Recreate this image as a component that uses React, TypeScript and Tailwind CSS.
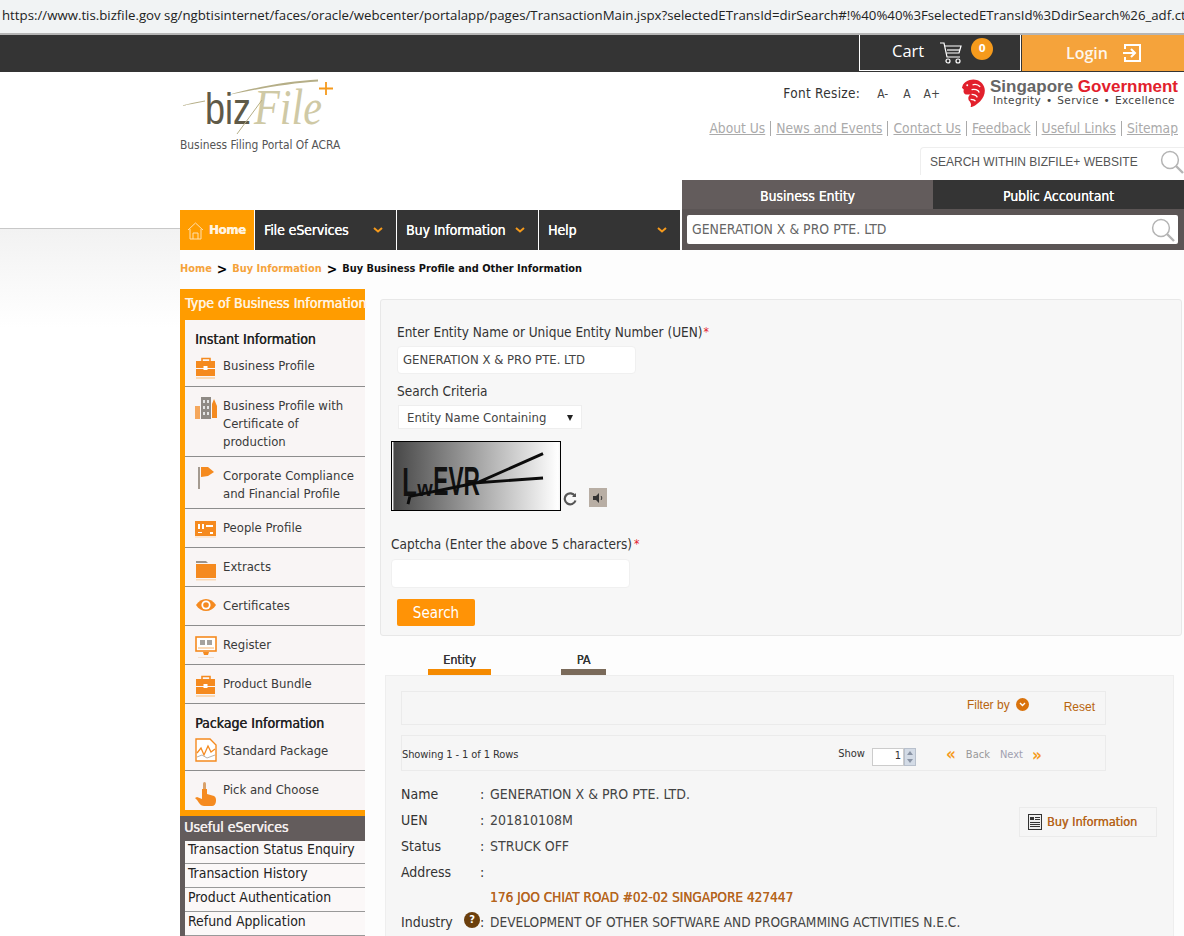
import React from "react";

const Ic = ({ children, w = 24, h = 24 }: { children: React.ReactNode; w?: number; h?: number }) => (
  <svg width={w} height={h} viewBox="0 0 24 24" className="shrink-0">{children}</svg>
);
const O = "#f58a1f";

const Briefcase = () => (
  <Ic>
    <path d="M8 5V2.5h8V5" fill="none" stroke={O} strokeWidth="1.6" />
    <rect x="2" y="5" width="19" height="7" fill={O} />
    <rect x="2" y="13" width="19" height="7" fill={O} />
    <rect x="9.5" y="10" width="4" height="4" fill="#fff" />
    <rect x="2" y="21" width="19" height="2" fill="#fbd9b5" />
  </Ic>
);
const Building = () => (
  <Ic>
    <rect x="1" y="10" width="5" height="13" fill="#f5a75c" />
    <path d="M18 22V8l2-5 3 7v12z" fill={O} />
    <rect x="7" y="1" width="10" height="22" fill="#8f8a85" />
    <path d="M9 4h2v3H9zM13 4h2v3h-2zM9 10h2v3H9zM13 10h2v3h-2zM9 16h2v3H9zM13 16h2v3h-2z" fill="#e4e4e4" />
  </Ic>
);
const Flag = () => (
  <Ic>
    <rect x="4" y="1" width="2" height="22" fill="#a49a90" />
    <path d="M7 1h7l6 5-6 4-7 1z" fill={O} />
  </Ic>
);
const People = () => (
  <Ic>
    <rect x="1" y="3" width="21" height="15" fill={O} />
    <path d="M4 6h2v5H4zM8 6h2v5H8zM12 7h7v2h-7zM4 14h4v1H4zM16 14h3v2h-3z" fill="#fff" />
    <rect x="1" y="18.5" width="21" height="1" fill="#fbd9b5" />
  </Ic>
);
const Folder = () => (
  <Ic>
    <path d="M2 4h10l2 2H2z" fill="#9a948e" />
    <rect x="2" y="7" width="20" height="14" fill={O} />
    <rect x="2" y="22" width="20" height="1.5" fill="#fbd9b5" />
  </Ic>
);
const Eye = () => (
  <Ic>
    <path d="M2 9c5-8 15-8 20 0-5 8-15 8-20 0z" fill={O} />
    <circle cx="12" cy="9" r="4.6" fill="#fff" />
    <circle cx="12" cy="9" r="2.8" fill={O} />
  </Ic>
);
const Monitor = () => (
  <Ic>
    <rect x="2" y="2" width="20" height="14" fill="#fff" stroke={O} strokeWidth="1.6" />
    <rect x="6" y="5" width="5" height="5" fill="#a5a29e" />
    <rect x="13" y="5" width="5" height="5" fill="#a5a29e" />
    <rect x="4" y="12" width="16" height="2" fill="#fbd9b5" />
    <path d="M9 17h6l-1 3h-4z" fill={O} />
    <rect x="4" y="22" width="16" height="1" fill="#f3e0cf" />
  </Ic>
);
const ChartDoc = () => (
  <Ic>
    <path d="M2 1h14l6 6v16H2z" fill="#fff" stroke={O} strokeWidth="1.4" />
    <path d="M3 15l4-5 3 7 4-9 3 6 4-3" fill="none" stroke={O} strokeWidth="1.3" />
    <path d="M3 19l5-2 5 3 8-3" fill="none" stroke="#b8b0a8" strokeWidth="1" />
  </Ic>
);
const Hand = () => (
  <Ic w={24} h={26}>
    <rect x="9" y="1" width="3" height="11" rx="1.5" fill="#d9a16b" />
    <path d="M8 8h5v5l7 2c2 1 2 3 2 5 0 3-2 5-4 5H10c-3 0-5-3-7-6l-2-2 2-1 5 2z" fill={O} />
  </Ic>
);
const Lens = ({ s = 24, c = "#b4b4b4" }: { s?: number; c?: string }) => (
  <svg width={s} height={s} viewBox="0 0 24 24" className="shrink-0">
    <circle cx="10" cy="10" r="8.4" fill="none" stroke={c} strokeWidth="1.5" />
    <path d="M16 16l7 7" stroke={c} strokeWidth="2.4" />
  </svg>
);
const Chev = () => (
  <svg width="10" height="6" viewBox="0 0 10 6"><path d="M1 1l4 3.5L9 1" fill="none" stroke="#f59a1c" strokeWidth="2" /></svg>
);

const Row = ({ icon, children, h, noBorder, textTop = "" }: { icon: React.ReactNode; children: React.ReactNode; h: string; noBorder?: boolean; textTop?: string }) => (
  <div className={`${h} flex items-start ${noBorder ? "" : "border-b border-[#8d8d8d]"}`}>
    <div className="w-[38px] pl-[9px] flex shrink-0">{icon}</div>
    <div className={`text-[#3a3a3a] leading-[18px] ${textTop}`}>{children}</div>
  </div>
);

const Sep = () => <span className="w-px h-[15px] bg-[#aaa] mx-[5px]" />;

const Detail = ({ k, h, children, help, className }: { k?: string; h: string; children?: React.ReactNode; help?: boolean; className?: string }) => (
  <div className={`flex items-center ${h}`}>
    <div className="w-[63px] text-[#333] shrink-0">{k}</div>
    {help ? (
      <>
        <span className="w-4 h-4 shrink-0 rounded-full bg-[#6b3f0c] text-white text-[11px] leading-4 text-center font-bold -mt-[5px]">?</span>
        <span className="w-[10px] shrink-0 text-[#333]">:</span>
      </>
    ) : (
      <span className="w-[26px] shrink-0 pl-[16px] text-[#333]">{k && ":"}</span>
    )}
    <span className={className ?? "text-[#444]"}>{children}</span>
  </div>
);

export default function App() {
  return (
    <div className="h-[936px] w-[1184px] overflow-hidden bg-white font-['DejaVu_Sans_Condensed','DejaVu_Sans',sans-serif] text-[13px]">
      {/* URL bar */}
      <div className="h-[33px] bg-[#f1f3f4] text-[13.24px] leading-[31px] pl-[2px] whitespace-nowrap overflow-hidden text-[#222] font-['Open_Sans',sans-serif]">
        https://www.tis.bizfile.gov sg/ngbtisinternet/faces/oracle/webcenter/portalapp/pages/TransactionMain.jspx?selectedETransId=dirSearch#!%40%40%3FselectedETransId%3DdirSearch%26_adf.ct
      </div>
      <div className="h-[2px] bg-[#b5b5b5]" />
      {/* dark top bar */}
      <div className="h-[37px] bg-[#343434] flex justify-end">
        <div className="w-[162px] border border-white border-t-0 h-[36px] flex items-center pl-[32px] text-white">
          <span className="text-[16.5px] -mt-[3px] font-['Open_Sans',sans-serif]">Cart</span>
          <svg width="24" height="24" viewBox="0 0 24 24" className="ml-[15px]" fill="none" stroke="#fff" strokeWidth="1.2">
            <path d="M1 2h4l3 14h13" />
            <path d="M6 5h16l-2 7H7.5" />
            <path d="M8 9h13" />
            <circle cx="9" cy="20" r="2" />
            <circle cx="19" cy="20" r="2" />
          </svg>
          <span className="ml-[8px] -mt-[7px] w-[22px] h-[22px] rounded-full bg-[#f59a1c] text-white text-[11px] font-bold flex items-center justify-center">0</span>
        </div>
        <div className="w-[163px] h-[36px] bg-[#f5a33b] flex items-center pl-[44px] text-white border-l-[1px] border-[#343434]">
          <span className="text-[16px] opacity-90 font-['Open_Sans',sans-serif] font-semibold">Login</span>
          <svg width="20" height="20" viewBox="0 0 20 20" className="ml-[14px]" fill="none" stroke="#fff" strokeWidth="2">
            <path d="M3 6V2h15v16H3v-4" />
            <path d="M1 10h11M9 6l4 4-4 4" />
          </svg>
        </div>
      </div>

      <div className="flex">
        {/* page background band on the left */}
        <div className="w-[180px] shrink-0">
          <div className="h-[156px]" />
          <div className="h-[100px] border-t border-[#c8c8c8] bg-gradient-to-b from-[#f2f2f2] to-white" />
        </div>

        <div className="w-[1004px]">
          {/* header */}
          <div className="h-[108px] flex justify-between">
            <div className="w-[180px] pt-[6px]">
              <svg width="160" height="58" viewBox="0 0 160 58" className="block">
                <path d="M0 28C8 26 16 24 25 22.5L25 23.5C16 25 8 27 0 28z" fill="#b5ae87" />
                <path d="M48 17C75 9 110 3 138 1.5L138 3.5C110 5 78 11 48 17z" fill="#b5ae87" />
                <text x="25" y="46" fontFamily="Liberation Sans" fontSize="44" fill="#5f5a48" textLength="46" lengthAdjust="spacingAndGlyphs">biz</text>
                <text x="74" y="46" fontFamily="Liberation Serif" fontStyle="italic" fontSize="50" fill="#cfc9a5" textLength="68" lengthAdjust="spacingAndGlyphs">File</text>
                <path d="M57 56L82 22" stroke="#b5ae87" strokeWidth="1" />
                <path d="M146 4v13M139 10.500h14" stroke="#f59a1c" strokeWidth="1.8" />
              </svg>
              <div className="text-[11.9px] text-[#555] mt-[1px] whitespace-nowrap leading-[16px]">Business Filing Portal Of ACRA</div>
            </div>
            <div className="flex flex-col items-end">
              <div className="flex items-start h-[43px] pt-[7px] pr-[6px]">
                <span className="text-[13.5px] text-[#333] mt-[4px] tracking-[0.3px]">Font Resize:</span>
                <span className="ml-[17px] mt-[6px] text-[12px] text-[#444]">A-</span>
                <span className="ml-[15px] mt-[6px] text-[12px] text-[#444]">A</span>
                <span className="ml-[13px] mt-[6px] text-[12px] text-[#444]">A+</span>
                <svg width="25" height="29" viewBox="0 0 26 30" className="ml-[21px]">
                  <path d="M9 1C15-1 22 2 24 8c2 5 0 11-4 15-3 3-7 6-10 6 1-3 0-5-2-7-1-3 0-5 2-6H5c-2-1-3-3-2-5L1 9l1-3c2-3 4-4 7-5z" fill="#e2202c" />
                  <path d="M12 6c3-1 6 0 8 2M11 11c3-1 7 0 8 3M11 16c2 0 5 1 6 3M10 21c2 0 4 0 5 2" stroke="#fff" strokeWidth="1.3" fill="none" />
                  <circle cx="6.500" cy="6.500" r="1" fill="#fff" />
                </svg>
                <div className="ml-[4px] flex flex-col items-center font-['DejaVu_Sans',sans-serif]">
                  <div className="text-[17px] font-bold leading-[15px] whitespace-nowrap font-['Liberation_Sans',sans-serif]">
                    <span className="text-[#666]">Singapore </span>
                    <span className="text-[#e2202c]">Government</span>
                  </div>
                  <div className="text-[10.5px] leading-[13px] text-[#444] whitespace-nowrap tracking-[0.4px] [word-spacing:1px]">Integrity • Service • Excellence</div>
                </div>
              </div>
              <div className="flex items-center h-[27px] pr-[6px] text-[#aaaaaa] text-[13.72px] underline">
                <span>About Us</span><Sep /><span>News and Events</span><Sep /><span>Contact Us</span><Sep /><span>Feedback</span><Sep /><span>Useful Links</span><Sep /><span>Sitemap</span>
              </div>
              <div className="mt-[5px] w-[264px] h-[28px] border-l border-t border-[#eeeeee] rounded-tl flex items-center justify-between pl-[9px] font-['Liberation_Sans',sans-serif] text-[12px] text-[#555]">
                <span>SEARCH WITHIN BIZFILE+ WEBSITE</span>
                <Lens s={24} />
              </div>
            </div>
          </div>

          {/* nav + tab panel */}
          <div className="flex h-[70px] items-end">
            <div className="w-[500px] h-[40px] flex gap-px text-white text-[14px] tracking-[-0.1px] [text-shadow:0.3px_0_0_currentColor]">
              <div className="w-[74px] bg-[#ff9c00] flex items-center pl-[7px] gap-[5px]">
                <svg width="17" height="19" viewBox="0 0 17 19" fill="none" stroke="#ffe0b0" strokeWidth="1"><path d="M1 9l7.5-7L16 9M3 8v10h11V8M6 18v-6h5v6" /></svg>
                <span className="font-bold text-[13px] text-[#fff3e0] tracking-[-0.3px]">Home</span>
              </div>
              <div className="w-[141px] bg-[#343434] flex items-center justify-between pl-[9px] pr-[13px]"><span>File eServices</span><Chev /></div>
              <div className="w-[141px] bg-[#343434] flex items-center justify-between pl-[9px] pr-[13px]"><span>Buy Information</span><Chev /></div>
              <div className="w-[141px] bg-[#343434] flex items-center justify-between pl-[9px] pr-[13px]"><span>Help</span><Chev /></div>
            </div>
            <div className="ml-[2px] w-[502px] h-[70px] flex flex-col">
              <div className="flex h-[29px] text-white text-[13.8px] pt-0">
                <div className="w-[251px] bg-[#635c5c] flex items-center justify-center pt-[3px] [text-shadow:0.2px_0_0_currentColor]">Business Entity</div>
                <div className="flex-1 bg-[#343434] flex items-center justify-center pt-[3px] [text-shadow:0.2px_0_0_currentColor]">Public Accountant</div>
              </div>
              <div className="h-[41px] bg-[#5b5555] px-[5px] pt-[6px]">
                <div className="h-[29px] w-[491px] bg-white rounded-[2px] flex items-center justify-between pl-[5px] pr-[3px] text-[13.9px] text-[#666]">
                  <span>GENERATION X &amp; PRO PTE. LTD</span>
                  <Lens s={24} />
                </div>
              </div>
            </div>
          </div>

          {/* breadcrumb */}
          <div className="h-[39px] flex items-center text-[10.9px] font-bold bg-[#fdfdfd]">
            <span className="text-[#f5a33b]">Home</span>
            <span className="mx-[5px] text-[14px] text-black">&gt;</span>
            <span className="text-[#f5a33b]">Buy Information</span>
            <span className="mx-[5px] text-[14px] text-black">&gt;</span>
            <span className="text-[#111]">Buy Business Profile and Other Information</span>
          </div>

          <div className="flex gap-[15px] bg-[#fdfdfd]">
            {/* sidebar */}
            <div className="w-[185px] shrink-0">
              <div className="h-[31px] bg-[#ff9c00] text-[#fff3e0] text-[14px] leading-[29px] pl-[5px] whitespace-nowrap [text-shadow:0.5px_0_0_currentColor]">Type of Business Information</div>
              <div className="border-l-[5px] border-[#ff9c00] bg-[#f9f5f5]">
                <div className="pl-[10px] h-[36px] pt-[10px] text-[14px] leading-[18px] text-[#222] [text-shadow:0.4px_0_0_currentColor]">Instant Information</div>
                <Row h="h-[31px]" textTop="mt-[1px]" icon={<Briefcase />}>Business Profile</Row>
                <Row h="h-[70px] pt-[9px]" textTop="mt-[1px]" icon={<Building />}>Business Profile with<br />Certificate of<br />production</Row>
                <Row h="h-[52px] pt-[9px]" textTop="mt-[1px]" icon={<Flag />}>Corporate Compliance<br />and Financial Profile</Row>
                <Row h="h-[39px] pt-[9px]" textTop="mt-[1px]" icon={<People />}>People Profile</Row>
                <Row h="h-[39px] pt-[9px]" textTop="mt-[1px]" icon={<Folder />}>Extracts</Row>
                <Row h="h-[39px] pt-[9px]" textTop="mt-[1px]" icon={<Eye />}>Certificates</Row>
                <Row h="h-[39px] pt-[9px]" textTop="mt-[1px]" icon={<Monitor />}>Register</Row>
                <Row h="h-[39px] pt-[9px]" textTop="mt-[1px]" icon={<Briefcase />}>Product Bundle</Row>
                <div className="pl-[10px] h-[34px] pt-[10px] text-[14px] leading-[18px] text-[#222] [text-shadow:0.4px_0_0_currentColor]">Package Information</div>
                <Row h="h-[33px]" textTop="mt-[4px]" icon={<ChartDoc />}>Standard Package</Row>
                <Row h="h-[39px] pt-[9px]" textTop="mt-[1px]" noBorder icon={<Hand />}>Pick and Choose</Row>
              </div>
              <div className="h-[6px] bg-[#ff9c00]" />
              <div className="h-[25px] bg-[#635c5c] text-[#f5f0f0] text-[14px] leading-[22px] pl-[4px] [text-shadow:0.5px_0_0_currentColor]">Useful eServices</div>
              <div className="border-l-[5px] border-[#635c5c] bg-[#fbf8f8] text-[13.9px] text-[#222]">
                {["Transaction Status Enquiry", "Transaction History", "Product Authentication", "Refund Application"].map((t) => (
                  <div key={t} className="h-[24px] border-b border-[#999] pl-[3px] leading-[19px] first:h-[23px] first:leading-[17px]">{t}</div>
                ))}
              </div>
            </div>

            {/* main */}
            <div className="w-[804px]">
              <div className="mt-[10px] w-[802px] h-[337px] bg-[#f7f7f7] border border-[#e8e8e8] rounded-[3px] pl-[10px] pt-[22px] text-[#333]">
                <div className="pl-[6px]">
                  <div className="text-[13.5px] leading-[20px]">Enter Entity Name or Unique Entity Number (UEN)<span className="ml-px text-[#e2202c] align-top text-[12px]">*</span></div>
                  <div className="mt-[4px] w-[239px] h-[28px] bg-white rounded-[4px] border border-[#f0f0f0] flex items-center pl-[5px] text-[13px] text-[#444]">GENERATION X &amp; PRO PTE. LTD</div>
                  <div className="mt-[7px] text-[13.5px] leading-[20px] h-[21px]">Search Criteria</div>
                  <div className="mt-[3px] ml-px w-[184px] h-[24px] bg-white border border-[#eeeeee] flex items-center justify-between pl-[8px] pr-[8px] pt-[1px] text-[13px] text-[#444]">
                    <span>Entity Name Containing</span>
                    <span className="w-0 h-0 border-l-[3px] border-r-[3px] border-t-[6px] border-l-transparent border-r-transparent border-t-[#222]" />
                  </div>
                </div>
                <div className="mt-[12px] flex items-end">
                  <svg width="170" height="70" viewBox="0 0 170 70" className="block border border-black">
                    <defs>
                      <linearGradient id="cg" x1="0" x2="1" y1="0" y2="0">
                        <stop offset="0" stopColor="#474747" />
                        <stop offset="1" stopColor="#ffffff" />
                      </linearGradient>
                    </defs>
                    <rect width="170" height="70" fill="url(#cg)" />
                    <text x="9" y="56" fontFamily="Liberation Sans" fontWeight="700" fontSize="42" fill="#111" textLength="15" lengthAdjust="spacingAndGlyphs">L</text>
                    <text x="24.500" y="56" fontFamily="Liberation Sans" fontWeight="700" fontSize="22" fill="#111" textLength="16" lengthAdjust="spacingAndGlyphs">w</text>
                    <text x="41" y="55" fontFamily="Liberation Sans" fontWeight="700" fontSize="42" fill="#111" textLength="48" lengthAdjust="spacingAndGlyphs">EVR</text>
                    <path d="M17 56L86 42L154 12M86 42L154 37M17 56l-2 8" stroke="#0c0c0c" strokeWidth="3" fill="none" />
                  </svg>
                  <svg width="14" height="14" viewBox="0 0 14 14" className="ml-[2px] mb-[5px]" fill="none" stroke="#555" strokeWidth="2.2">
                    <path d="M12 4A5.5 5.5 0 1 0 12.5 8.5" />
                    <path d="M9 5h4V1" fill="#555" stroke="none" />
                  </svg>
                  <div className="ml-[12px] mb-[4px] w-[18px] h-[19px] bg-[#b8aea4] flex items-center justify-center">
                    <svg width="12" height="12" viewBox="0 0 12 12"><path d="M1 4h3l3-3v10L4 8H1z" fill="#333" /><path d="M9 4c1 1 1 3 0 4" stroke="#333" fill="none" /></svg>
                  </div>
                </div>
                <div className="mt-[23px] text-[13.5px] leading-[20px]">Captcha (Enter the above 5 characters)<span className="ml-[2px] text-[#e2202c] align-top text-[12px]">*</span></div>
                <div className="mt-[5px] w-[239px] h-[29px] bg-white rounded-[4px] border border-[#f0f0f0]" />
                <div className="mt-[11px] ml-[6px] w-[78px] h-[27px] pt-[2px] bg-[#ff9306] rounded-[2px] text-white text-[15px] flex items-center justify-center">Search</div>
              </div>

              {/* tabs */}
              <div className="mt-[16px] flex h-[23px] ml-[48px] text-[12.5px] text-[#333] [text-shadow:0.3px_0_0_currentColor]">
                <div className="w-[63px] flex flex-col justify-end items-center">
                  <span className="leading-[16px] mb-[1px]">Entity</span>
                  <span className="h-[6px] w-full bg-[#f58a00]" />
                </div>
                <div className="ml-[70px] w-[45px] flex flex-col justify-end items-center">
                  <span className="leading-[16px] mb-[1px]">PA</span>
                  <span className="h-[6px] w-full bg-[#7a6a5a]" />
                </div>
              </div>
              <div className="ml-[5px] w-[789px] h-[300px] bg-[#f6f6f6] border border-[#eeeeee] pl-[15px] pt-[15px]">
                <div className="w-[705px] h-[34px] border border-[#ebebeb] flex items-center justify-end pr-[10px] font-['Liberation_Sans',sans-serif] text-[12px] text-[#b8650d]">
                  <span className="-mt-[7px]">Filter by</span>
                  <span className="ml-[6px] -mt-[7px] w-[13px] h-[13px] rounded-full bg-[#d9730d] flex items-center justify-center">
                    <svg width="7" height="5" viewBox="0 0 7 5"><path d="M1 1l2.5 2.5L6 1" stroke="#fff" fill="none" strokeWidth="1.4" /></svg>
                  </span>
                  <span className="ml-[35px] -mt-[3px]">Reset</span>
                </div>
                <div className="mt-[10px] w-[705px] h-[36px] pt-[5px] border border-[#ebebeb] flex items-center text-[11px] text-[#333]">
                  <span className="tracking-[-0.1px]">Showing 1 - 1 of 1 Rows</span>
                  <span className="ml-[320px] -mt-[2px]">Show</span>
                  <span className="ml-[7px] mt-[2px] w-[32px] h-[18px] border border-[#ccc] bg-white flex items-center justify-end pr-[2px]">1</span>
                  <span className="mt-[2px] w-[12px] h-[18px] bg-[#d3dbe6] border border-[#b8c0cc] flex flex-col items-center justify-around">
                    <span className="w-0 h-0 border-l-[3px] border-r-[3px] border-b-[4px] border-l-transparent border-r-transparent border-b-[#8a94a5]" />
                    <span className="w-0 h-0 border-l-[3px] border-r-[3px] border-t-[4px] border-l-transparent border-r-transparent border-t-[#8a94a5]" />
                  </span>
                  <span className="ml-[30px] text-[#f59a1c] text-[17px] font-bold leading-none -mt-[3px]">«</span>
                  <span className="ml-[10px] text-[#999]">Back</span>
                  <span className="ml-[10px] text-[#a0a0b0]">Next</span>
                  <span className="ml-[9px] text-[#f59a1c] text-[17px] font-bold leading-none -mt-[1px]">»</span>
                </div>
                <div className="flex mt-[10px]">
                  <div className="w-[618px] text-[14px]">
                    <Detail k="Name" h="h-[26px]">GENERATION X &amp; PRO PTE. LTD.</Detail>
                    <Detail k="UEN" h="h-[26px]">201810108M</Detail>
                    <Detail k="Status" h="h-[26px]">STRUCK OFF</Detail>
                    <Detail k="Address" h="h-[26px]" />
                    <Detail h="h-[25px]" className="text-[#b5651d] text-[13.5px] [text-shadow:0.3px_0_0_currentColor]">176 JOO CHIAT ROAD #02-02 SINGAPORE 427447</Detail>
                    <Detail k="Industry" h="h-[24px]" help><span className="whitespace-nowrap text-[13.6px]">DEVELOPMENT OF OTHER SOFTWARE AND PROGRAMMING ACTIVITIES N.E.C.</span></Detail>
                  </div>
                  <div className="mt-[26px] w-[138px] h-[30px] border border-[#ebebeb] flex items-center pl-[8px] text-[12.5px] text-[#b5651d] whitespace-nowrap [text-shadow:0.3px_0_0_currentColor]">
                    <svg width="14" height="16" viewBox="0 0 14 16" className="mr-[5px] shrink-0">
                      <rect x="0.5" y="0.5" width="13" height="15" fill="#eee" stroke="#333" />
                      <path d="M2 3h4v3H2zM7 3h5v1H7zM7 5h5v1H7zM2 8h10v1H2zM2 10h10v1H2zM2 12h10v1H2z" fill="#333" />
                    </svg>
                    Buy Information
                  </div>
                </div>
              </div>
            </div>
          </div>
        </div>
      </div>
    </div>
  );
}
